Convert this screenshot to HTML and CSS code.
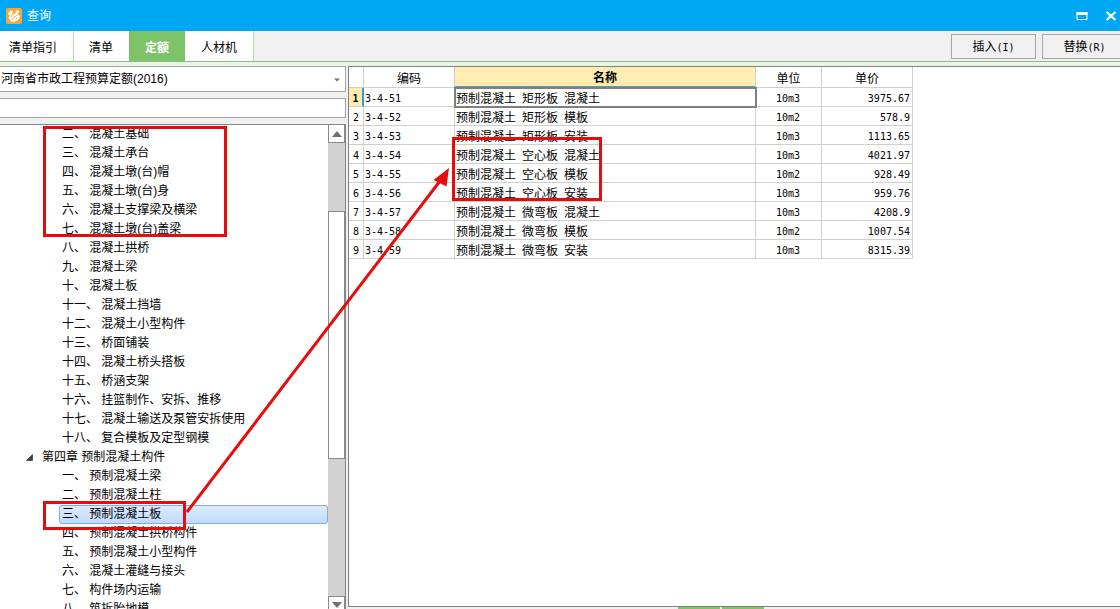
FILE: index.html
```html
<!DOCTYPE html>
<html lang="zh-CN">
<head>
<meta charset="utf-8">
<title>查询</title>
<link rel="stylesheet" href="styles.css">
</head>
<body>
<div class="window">
  <header class="titlebar">
    <svg class="logo" width="16" height="16" viewBox="0 0 16 16" aria-hidden="true">
      <rect width="16" height="16" rx="2" fill="#f3a73a"/>
      <path d="M2 6C3 3.500 5 2 6.500 2.500C7.500 3 6.500 5 5.500 6.500L8.500 5L11.500 2L13.500 3.500L11 6.500C13 6 14.500 7.500 13.500 10C12 13 8 14.500 5 13.500L3.500 11.500L2.500 9.500L4 7.500Z" fill="#fff"/>
      <path d="M4.500 8.500L10 4.500M5.500 11L11.500 7M9.500 11.500L11.500 9.500" stroke="#f3a73a" stroke-width="0.900" fill="none"/>
    </svg>
    <h1 class="title">查询</h1>
    <div class="controls">
      <button class="control" type="button" aria-label="最大化">
        <svg width="12" height="10" viewBox="0 0 12 10"><path d="M1 1.500H11V8.500H1Z" fill="none" stroke="#fff"/><path d="M.5 1H11.500V4H.5Z" fill="#fff"/></svg>
      </button>
      <button class="control" type="button" aria-label="关闭">
        <svg width="12" height="10" viewBox="0 0 12 10"><path d="M1.500 1L10.500 9M10.500 1L1.500 9" stroke="#fff" stroke-width="2.200"/></svg>
      </button>
    </div>
  </header>

  <nav class="toolbar">
    <div class="tabs">
      <button class="tab" type="button">清单指引</button>
      <button class="tab tab-mid" type="button">清单</button>
      <button class="tab tab-active" type="button">定额</button>
      <button class="tab" type="button">人材机</button>
    </div>
    <div class="actions">
      <button class="action" type="button">插入<span class="mono">(I)</span></button>
      <button class="action" type="button">替换<span class="mono">(R)</span></button>
    </div>
  </nav>

  <main class="content">
    <section class="side">
      <div class="picker">
        <select class="quota" aria-label="定额库"><option>河南省市政工程预算定额(2016)</option></select>
        <svg class="caret" width="6" height="4" viewBox="0 0 6 4" aria-hidden="true"><path d="M0 .5H6L3 3.500Z" fill="#707070"/></svg>
      </div>
      <input class="search" type="text" aria-label="搜索">
      <div class="tree-box">
        <ul class="tree">
          <li class="node">二、 混凝土基础</li>
          <li class="node">三、 混凝土承台</li>
          <li class="node">四、 混凝土墩(台)帽</li>
          <li class="node">五、 混凝土墩(台)身</li>
          <li class="node">六、 混凝土支撑梁及横梁</li>
          <li class="node">七、 混凝土墩(台)盖梁</li>
          <li class="node">八、 混凝土拱桥</li>
          <li class="node">九、 混凝土梁</li>
          <li class="node">十、 混凝土板</li>
          <li class="node">十一、 混凝土挡墙</li>
          <li class="node">十二、 混凝土小型构件</li>
          <li class="node">十三、 桥面铺装</li>
          <li class="node">十四、 混凝土桥头搭板</li>
          <li class="node">十五、 桥涵支架</li>
          <li class="node">十六、 挂篮制作、安拆、推移</li>
          <li class="node">十七、 混凝土输送及泵管安拆使用</li>
          <li class="node">十八、 复合模板及定型钢模</li>
          <li class="node chapter"><svg class="expander" width="7" height="7" viewBox="0 0 7 7" aria-hidden="true"><path d="M6.500 .5V6.500H.5Z" fill="#404040" stroke="#222" stroke-width=".6"/></svg>第四章 预制混凝土构件</li>
          <li class="node">一、 预制混凝土梁</li>
          <li class="node">二、 预制混凝土柱</li>
          <li class="node selected">三、 预制混凝土板</li>
          <li class="node">四、 预制混凝土拱桥构件</li>
          <li class="node">五、 预制混凝土小型构件</li>
          <li class="node">六、 混凝土灌缝与接头</li>
          <li class="node">七、 构件场内运输</li>
          <li class="node">八、 筑拆胎地模</li>
        </ul>
        <div class="scrollbar">
          <button class="arrow" type="button" aria-label="向上滚动"><svg width="10" height="6" viewBox="0 0 10 6"><path d="M5 0L10 6H0Z" fill="#707070"/></svg></button>
          <div class="track-before"></div>
          <div class="thumb"></div>
          <div class="track-after"></div>
          <button class="arrow arrow-down" type="button" aria-label="向下滚动"><svg width="10" height="6" viewBox="0 0 10 6"><path d="M5 6L10 0H0Z" fill="#707070"/></svg></button>
        </div>
      </div>
    </section>

    <section class="results">
      <div class="sheet">
        <table class="grid">
          <colgroup><col class="c-num"><col class="c-code"><col class="c-name"><col class="c-unit"><col class="c-price"></colgroup>
          <thead>
            <tr><th></th><th>编码</th><th class="sorted">名称</th><th>单位</th><th>单价</th></tr>
          </thead>
          <tbody>
            <tr><td class="num current-num">1</td><td>3-4-51</td><td class="current"><span class="cn">预制混凝土</span> <span class="cn">矩形板</span> <span class="cn">混凝土</span></td><td class="unit">10m3</td><td class="price">3975.67</td></tr>
            <tr><td class="num">2</td><td>3-4-52</td><td><span class="cn">预制混凝土</span> <span class="cn">矩形板</span> <span class="cn">模板</span></td><td class="unit">10m2</td><td class="price">578.9</td></tr>
            <tr><td class="num">3</td><td>3-4-53</td><td><span class="cn">预制混凝土</span> <span class="cn">矩形板</span> <span class="cn">安装</span></td><td class="unit">10m3</td><td class="price">1113.65</td></tr>
            <tr><td class="num">4</td><td>3-4-54</td><td><span class="cn">预制混凝土</span> <span class="cn">空心板</span> <span class="cn">混凝土</span></td><td class="unit">10m3</td><td class="price">4021.97</td></tr>
            <tr><td class="num">5</td><td>3-4-55</td><td><span class="cn">预制混凝土</span> <span class="cn">空心板</span> <span class="cn">模板</span></td><td class="unit">10m2</td><td class="price">928.49</td></tr>
            <tr><td class="num">6</td><td>3-4-56</td><td><span class="cn">预制混凝土</span> <span class="cn">空心板</span> <span class="cn">安装</span></td><td class="unit">10m3</td><td class="price">959.76</td></tr>
            <tr><td class="num">7</td><td>3-4-57</td><td><span class="cn">预制混凝土</span> <span class="cn">微弯板</span> <span class="cn">混凝土</span></td><td class="unit">10m3</td><td class="price">4208.9</td></tr>
            <tr><td class="num">8</td><td>3-4-58</td><td><span class="cn">预制混凝土</span> <span class="cn">微弯板</span> <span class="cn">模板</span></td><td class="unit">10m2</td><td class="price">1007.54</td></tr>
            <tr><td class="num">9</td><td>3-4-59</td><td><span class="cn">预制混凝土</span> <span class="cn">微弯板</span> <span class="cn">安装</span></td><td class="unit">10m3</td><td class="price">8315.39</td></tr>
          </tbody>
        </table>
      </div>
      <div class="splitter"><span class="grip"></span><span class="grip"></span></div>
    </section>
  </main>

  <svg class="markup" width="1120" height="609" viewBox="0 0 1120 609" aria-hidden="true">
    <g fill="none" stroke="#e60c0c" stroke-width="3">
      <rect x="44.500" y="127.500" width="181" height="108"/>
      <rect x="453.500" y="138.500" width="147" height="61"/>
      <rect x="44.500" y="502.500" width="140" height="26"/>
      <path d="M187 512L440 181"/>
    </g>
    <path d="M449 168L433.500 180L446.500 186.500Z" fill="#e60c0c"/>
  </svg>
</div>
</body>
</html>
```
FILE: styles.css
```css
* { box-sizing: border-box; }

body {
  margin: 0;
  background: #f0f0f0;
  color: #000;
  font: 12px/19px "Liberation Sans", "Noto Sans CJK SC", sans-serif;
}

button, select, input { font: inherit; color: inherit; border-radius: 0; }

.window {
  position: relative;
  display: flex;
  flex-direction: column;
  height: 100vh;
  overflow: hidden;
}

.mono { font-family: "DejaVu Sans Mono", monospace; font-size: 10px; }

/* Title bar */
.titlebar {
  display: flex;
  flex: none;
  align-items: center;
  height: 31px;
  padding-left: 6px;
  background: #00a8f3;
  color: #fff;
}
.title { margin: 0; padding: 2px 0 0 5px; font-size: 12px; font-weight: 400; }
.controls { display: flex; gap: 17px; margin-left: auto; padding-right: 3px; }
.control { display: flex; padding: 0; border: 0; background: none; }

/* Tabs and actions */
.toolbar {
  display: flex;
  flex: none;
  justify-content: space-between;
  height: 31px;
  border-bottom: 1px solid #8fb98a;
}
.tabs { display: flex; }
.tab {
  padding: 5px 16px 0;
  border: 0;
  border-right: 1px solid #b9dcae;
  background: #fff;
}
.tab:first-child { padding-left: 9px; }
.tab-mid { padding: 5px 16px 0 15px; border-right: 0; }
.tab-active { border: 0; background: #7cc36a; color: #fff; font-weight: 700; }
.actions { display: flex; gap: 6px; margin-right: -7px; padding-top: 3px; }
.action {
  width: 85px;
  height: 25px;
  padding: 2px 0 0;
  border: 1px solid #a6a6a6;
  background: #f0f0f0;
}

/* Body */
.content {
  display: grid;
  flex: 1;
  grid-template-columns: 346px 1fr;
  gap: 2px;
  min-height: 0;
  padding-top: 4px;
  background: linear-gradient(#e9f6e6 4px, #f0f0f0 4px);
}
.side { display: flex; flex-direction: column; min-height: 0; }

.picker { position: relative; display: flex; flex: none; height: 26px; }
.quota {
  flex: 1;
  padding: 0 0 0 1px;
  appearance: none;
  border: 1px solid #a6a6a6;
  border-left: 0;
  background: #fff;
}
.caret { position: absolute; right: 6px; top: 12px; }
.search {
  flex: none;
  width: 100%;
  height: 20px;
  margin: 6px 0;
  border: 1px solid #a6a6a6;
  border-left: 0;
  background: #fff;
}

/* Tree */
.tree-box {
  display: flex;
  flex: 1;
  min-height: 0;
  border: 1px solid #83868c;
  border-width: 1px 1px 0 0;
  background: #fff;
}
.tree { flex: 1; margin: 0; padding: 0; overflow: hidden; list-style: none; }
.node { height: 19px; padding-left: 62px; white-space: nowrap; }
.chapter { display: flex; align-items: center; gap: 9px; padding-left: 26px; white-space: pre; }
.selected {
  margin-left: 59px;
  padding-left: 2px;
  border: 1px solid #84acdd;
  border-radius: 3px;
  background: linear-gradient(#dcebfc, #c1dbfc);
  line-height: 17px;
}

.scrollbar { display: flex; flex: none; flex-direction: column; width: 17px; background: #d2d2d2; }
.arrow {
  display: flex;
  flex: none;
  align-items: center;
  justify-content: center;
  height: 18px;
  padding: 0;
  border: 1px solid #8a8a8a;
  border-top: 0;
  background: #fff;
}
.arrow-down { height: 13px; padding-top: 4px; border-top: 1px solid #8a8a8a; border-bottom: 0; }
.track-before { flex: 68; }
.thumb { flex: 247; border: 1px solid #8a8a8a; background: #fff; }
.track-after { flex: 138; }

/* Results */
.results { display: flex; flex-direction: column; min-width: 0; min-height: 0; }
.sheet {
  flex: 1;
  min-height: 0;
  overflow: hidden;
  border: 1px solid #808080;
  border-right: 0;
  background: #fff;
}
.grid { width: 564px; table-layout: fixed; border-collapse: separate; border-spacing: 0; }
.c-num { width: 15px; }
.c-code { width: 91px; }
.c-name { width: 301px; }
.c-unit { width: 66px; }
.c-price { width: 91px; }
th, td { border: 1px solid #cfcfcf; border-width: 0 1px 1px 0; white-space: nowrap; }
th { height: 21px; padding: 3px 0 0; font-weight: 400; line-height: 16px; }
.sorted { border-bottom: 2px solid #4a9fbd; background: #ffecb0; font-weight: 700; }
td {
  height: 19px;
  padding: 3px 2px 0 1px;
  font-family: "DejaVu Sans Mono", monospace;
  font-size: 10px;
  line-height: 15px;
}
.cn {
  font-family: "Noto Sans CJK SC", sans-serif;
  font-size: 12px;
  line-height: 1;
  vertical-align: -1px;
}
.num { padding: 3px 0 0; text-align: center; }
.current-num { border-right: 2px solid #3a9cc8; background: #ffecb0; font-weight: 700; }
.current { outline: 2px solid #7f7f7f; outline-offset: -1px; }
.unit { text-align: center; }
.price { text-align: right; }

.splitter { display: flex; flex: none; gap: 2px; height: 2px; padding-left: 330px; }
.grip { width: 42px; background: #7cc36a; }

/* Callout drawing laid over the window */
.markup { position: absolute; top: 0; left: 0; pointer-events: none; }
```
